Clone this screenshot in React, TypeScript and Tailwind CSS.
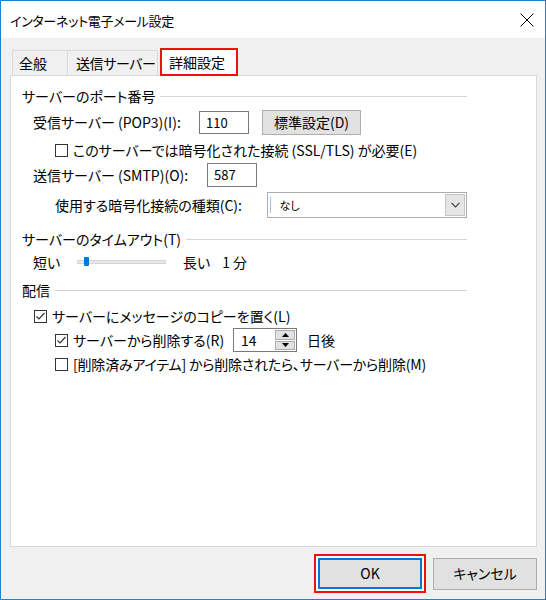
import React from "react";

const FONT = "[font-family:'Noto_Sans_CJK_JP','Noto_Sans_CJK_SC',sans-serif] [font-feature-settings:'palt']";

function Header({ children, className = "" }: { children: React.ReactNode; className?: string }) {
  return (
    <div className={`flex items-center h-[18px] ${className}`}>
      <span className="whitespace-nowrap">{children}</span>
      <div className="flex-1 h-px bg-[#d5d5d5] ml-[5px] mt-[1px]" />
    </div>
  );
}

function Checkbox({ checked }: { checked?: boolean }) {
  return (
    <div className="w-[13px] h-[13px] border border-[#333333] bg-white shrink-0 flex items-center justify-center">
      {checked && (
        <svg width="11" height="11" viewBox="0 0 11 11">
          <polyline points="1.5,5.5 4,8 9.5,2" fill="none" stroke="#333" strokeWidth="1.2" />
        </svg>
      )}
    </div>
  );
}

export default function App() {
  return (
    <div className={`w-[546px] h-[600px] border border-[#1883d7] bg-[#f0f0f0] flex flex-col text-[14px] text-black ${FONT}`}>
      {/* Title bar */}
      <div className="h-[37px] bg-white flex items-center justify-between pl-[9px] pr-[11px] shrink-0">
        <span className="text-[13px] tracking-[-0.3px] mt-[2px] whitespace-nowrap">インターネット電子メール設定</span>
        <svg width="14" height="14" viewBox="0 0 14 14" className="mt-[1px]">
          <line x1="0.5" y1="0.5" x2="13.5" y2="13.5" stroke="#000" strokeWidth="1" />
          <line x1="13.5" y1="0.5" x2="0.5" y2="13.5" stroke="#000" strokeWidth="1" />
        </svg>
      </div>

      {/* Body */}
      <div className="flex-1 flex flex-col pl-[9px] pr-[8px] pt-[9px]">
        {/* Tabs */}
        <div className="flex items-end h-[28px] pl-[2px]">
          <div className="h-[25px] w-[56px] border border-[#d9d9d9] border-b-0 bg-[#f0f0f0] flex items-center pl-[6px] whitespace-nowrap">
            全般
          </div>
          <div className="h-[25px] w-[90px] border border-[#d9d9d9] border-b-0 border-l-0 bg-[#f0f0f0] flex items-center pl-[8px] whitespace-nowrap tracking-[-0.4px]">
            送信サーバー
          </div>
          <div className="h-[28px] w-[78px] border-2 border-[#ee1111] bg-white flex items-center pl-[7px] ml-[2px] -mb-[1px] relative z-10 whitespace-nowrap">
            詳細設定
          </div>
        </div>

        {/* Panel */}
        <div className="h-[472px] bg-white border border-[#d9d9d9] px-[11px]">
          <div className="w-[445px] flex flex-col">
            <Header className="mt-[11px]">サーバーのポート番号</Header>

            {/* POP3 */}
            <div className="flex items-center h-[25px] mt-[5px] pl-[11px]">
              <span className="w-[166px] whitespace-nowrap">受信サーバー (POP3)(I):</span>
              <div className="w-[50px] h-[23px] border border-[#7a7a7a] bg-white flex items-center pl-[6px] text-[13px]">110</div>
              <div className="ml-[13px] w-[99px] h-[25px] border border-[#adadad] bg-[#e1e1e1] flex items-center justify-center">
                標準設定(D)
              </div>
            </div>

            {/* SSL */}
            <div className="flex items-center h-[18px] mt-[6px] pl-[33px]">
              <Checkbox />
              <span className="ml-[5px] whitespace-nowrap">このサーバーでは暗号化された接続 (SSL/TLS) が必要(E)</span>
            </div>

            {/* SMTP */}
            <div className="flex items-center h-[24px] mt-[4px] pl-[11px]">
              <span className="w-[174px] whitespace-nowrap">送信サーバー (SMTP)(O):</span>
              <div className="w-[50px] h-[24px] border border-[#7a7a7a] bg-white flex items-center pl-[6px] text-[13px]">587</div>
            </div>

            {/* Encryption */}
            <div className="flex items-center h-[26px] mt-[5px] pl-[33px]">
              <span className="w-[213px] whitespace-nowrap">使用する暗号化接続の種類(C):</span>
              <div className="w-[200px] h-[26px] border border-[#adadad] bg-white flex items-center relative">
                <div className="w-px h-[16px] bg-[#9cc8ee] ml-[2px]" />
                <span className="text-[11px] ml-[8px]">なし</span>
                <div className="ml-auto mr-px w-[20px] h-[22px] bg-[#e5e5e5] border border-[#c5c5c5] flex items-center justify-center">
                  <svg width="9" height="6" viewBox="0 0 9 6">
                    <polyline points="0.5,0.8 4.5,4.8 8.5,0.8" fill="none" stroke="#404040" strokeWidth="1.2" />
                  </svg>
                </div>
              </div>
            </div>

            <Header className="mt-[12px]">サーバーのタイムアウト(T)</Header>

            {/* Slider */}
            <div className="flex items-center h-[18px] mt-[5px] pl-[11px]">
              <span className="w-[44px]">短い</span>
              <div className="w-[89px] h-[4px] bg-[#e7e7e7] border border-[#d6d6d6] relative flex items-center">
                <div className="absolute left-[6px] top-[-4px] w-[5px] h-[9px] bg-[#0078d7] rounded-[1px]" />
              </div>
              <span className="ml-[17px]">長い</span>
              <span className="ml-[12px]">1 分</span>
            </div>

            <Header className="mt-[10px]">配信</Header>

            {/* Leave copy */}
            <div className="flex items-center h-[18px] mt-[8px] pl-[12px]">
              <Checkbox checked />
              <span className="ml-[5px] whitespace-nowrap">サーバーにメッセージのコピーを置く(L)</span>
            </div>

            {/* Delete after */}
            <div className="flex items-center h-[24px] mt-[3px] pl-[33px]">
              <div className="w-[178px] flex items-center">
                <Checkbox checked />
                <span className="ml-[5px] whitespace-nowrap">サーバーから削除する(R)</span>
              </div>
              <div className="w-[64px] h-[24px] border border-[#7a7a7a] bg-white flex items-center">
                <span className="ml-[7px] text-[14px]">14</span>
                <div className="ml-auto mr-px w-[20px] h-[20px] flex flex-col gap-px">
                  <div className="flex-1 bg-[#e1e1e1] border border-[#adadad] flex items-center justify-center">
                    <svg width="7" height="4" viewBox="0 0 7 4"><polygon points="0,4 3.5,0 7,4" fill="#000" /></svg>
                  </div>
                  <div className="flex-1 bg-[#e1e1e1] border border-[#adadad] flex items-center justify-center">
                    <svg width="7" height="4" viewBox="0 0 7 4"><polygon points="0,0 3.5,4 7,0" fill="#000" /></svg>
                  </div>
                </div>
              </div>
              <span className="ml-[10px]">日後</span>
            </div>

            {/* Delete when deleted */}
            <div className="flex items-center h-[18px] mt-[3px] pl-[33px]">
              <Checkbox />
              <span className="ml-[5px] whitespace-nowrap tracking-[-0.2px]">[削除済みアイテム] から削除されたら、サーバーから削除(M)</span>
            </div>
          </div>
        </div>

        {/* Buttons */}
        <div className="flex justify-end items-center mt-[7px]">
          <div className="border-2 border-[#ee1111] p-[2px] bg-white">
            <div className="w-[104px] h-[31px] border-2 border-[#0078d7] bg-[#e1e1e1] flex items-center justify-center">
              OK
            </div>
          </div>
          <div className="ml-[7px] w-[104px] h-[32px] border border-[#adadad] bg-[#e1e1e1] flex items-center justify-center">
            キャンセル
          </div>
        </div>
      </div>
    </div>
  );
}
